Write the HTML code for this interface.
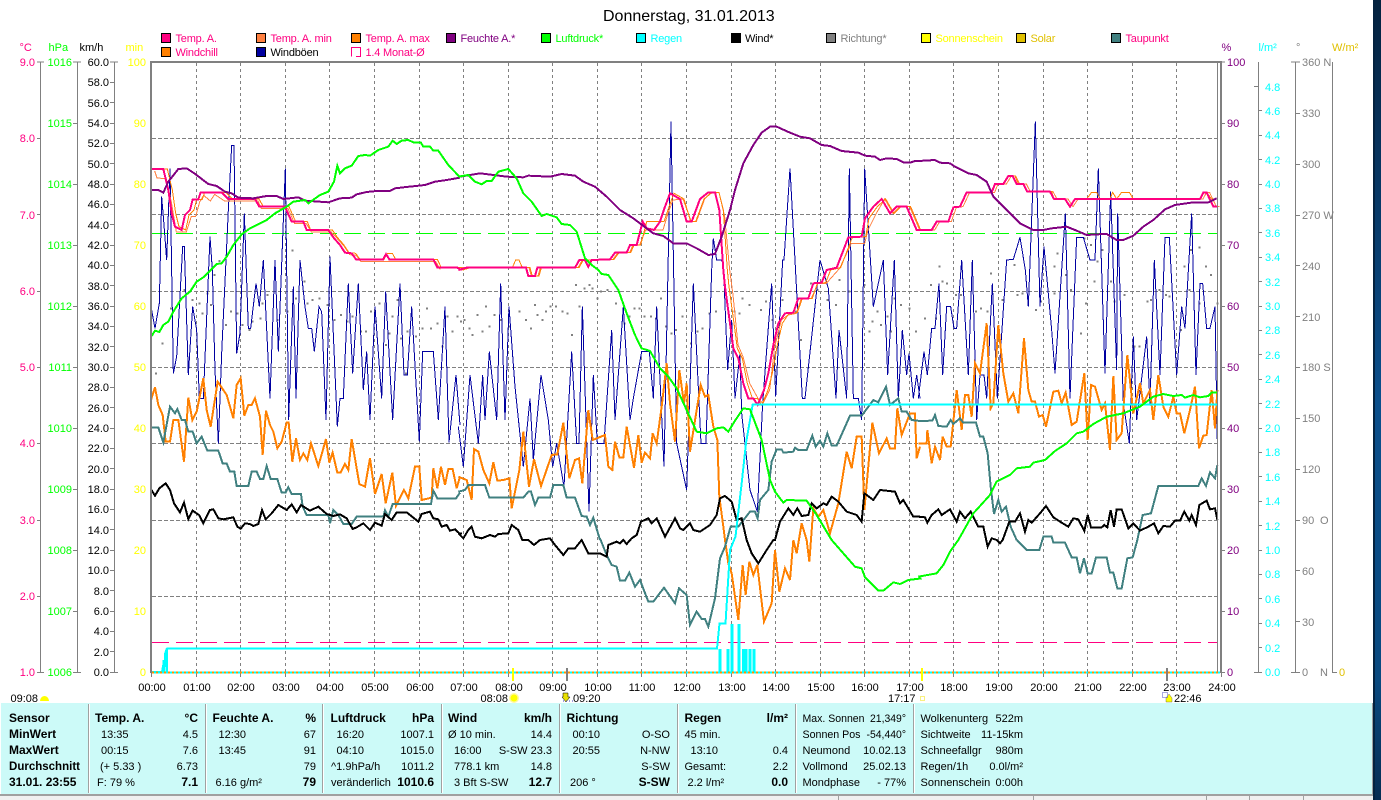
<!DOCTYPE html>
<html><head><meta charset="utf-8"><title>Donnerstag, 31.01.2013</title>
<style>
html,body{margin:0;padding:0;background:#fff;width:1381px;height:800px;overflow:hidden}
svg{display:block;position:absolute;left:0;top:0}
text{font-family:"Liberation Sans",sans-serif;font-size:11px}
.b{font-weight:bold;font-size:12px;fill:#000}
.r{text-anchor:end}
.l polyline{fill:none;stroke-linejoin:miter}
.g{shape-rendering:crispEdges}
.lg text{letter-spacing:-.2px}
</style></head><body>
<svg width="1381" height="800" viewBox="0 0 1381 800">
<defs>
<linearGradient id="desk" x1="0" y1="0" x2="0" y2="1"><stop offset="0" stop-color="#04223f"/><stop offset=".15" stop-color="#073058"/><stop offset=".5" stop-color="#0b4f8c"/><stop offset=".85" stop-color="#0a4a80"/><stop offset="1" stop-color="#062c52"/></linearGradient>
</defs>
<rect x="1373" y="0" width="8" height="800" fill="url(#desk)"/>
<rect x="1373" y="0" width="2" height="800" fill="#04223f"/>
<rect x="1" y="703" width="1371" height="91" fill="#ccfaf8"/>
<rect x="1372" y="703" width="1" height="92" fill="#a0a0a0"/>
<rect x="0" y="794" width="1373" height="2" fill="#a0a0a0"/>
<rect x="0" y="796" width="1373" height="4" fill="#f0f0f0"/>
<path class="g" stroke="#a0a0a0" d="M1206.500 796V800M1249.500 796V800M1303.500 796V800M1033.500 796V800M838.500 794V800" fill="none"/>
<!-- panel separators -->
<g class="g" fill="#a0a0a0"><rect x="88" y="704" width="1" height="89"/><rect x="205" y="704" width="1" height="89"/><rect x="322" y="704" width="1" height="89"/><rect x="441" y="704" width="1" height="89"/><rect x="559" y="704" width="1" height="89"/><rect x="677" y="704" width="1" height="89"/><rect x="795" y="704" width="1" height="89"/><rect x="913" y="704" width="1" height="89"/></g>
<g class="g" fill="#fff"><rect x="89" y="704" width="1" height="89"/><rect x="206" y="704" width="1" height="89"/><rect x="323" y="704" width="1" height="89"/><rect x="442" y="704" width="1" height="89"/><rect x="560" y="704" width="1" height="89"/><rect x="678" y="704" width="1" height="89"/><rect x="796" y="704" width="1" height="89"/><rect x="914" y="704" width="1" height="89"/></g>

<!-- title -->
<text x="603" y="21" style="font-size:16px" fill="#000">Donnerstag, 31.01.2013</text>

<!-- legend -->
<g class="g" stroke="#000" stroke-width="1">
<rect x="161.500" y="33.500" width="9" height="9" fill="#ff0080"/><rect x="256.500" y="33.500" width="9" height="9" fill="#ff8040"/><rect x="351.500" y="33.500" width="9" height="9" fill="#ff8000"/><rect x="446.500" y="33.500" width="9" height="9" fill="#800080"/><rect x="541.500" y="33.500" width="9" height="9" fill="#00ff00"/><rect x="636.500" y="33.500" width="9" height="9" fill="#00ffff"/><rect x="731.500" y="33.500" width="9" height="9" fill="#000"/><rect x="826.500" y="33.500" width="9" height="9" fill="#808080"/><rect x="921.500" y="33.500" width="9" height="9" fill="#ffff00"/><rect x="1016.500" y="33.500" width="9" height="9" fill="#e0c000"/><rect x="1111.500" y="33.500" width="9" height="9" fill="#408080"/>
<rect x="161.500" y="47.500" width="9" height="9" fill="#ff8000"/><rect x="256.500" y="47.500" width="9" height="9" fill="#0000a0"/>
</g>
<path class="g" d="M351.500 56.500V47.500H360.500V56.500H356" fill="none" stroke="#ff0080"/>
<g class="lg" fill="#ff0080"><text x="175.500" y="42">Temp. A.</text><text x="270.500" y="42">Temp. A. min</text><text x="365.500" y="42">Temp. A. max</text><text x="1125.500" y="42">Taupunkt</text><text x="175.500" y="56">Windchill</text><text x="365.500" y="56">1.4 Monat-Ø</text></g>
<g class="lg"><text x="460.500" y="42" fill="#800080">Feuchte A.*</text><text x="555.500" y="42" fill="#00ff00">Luftdruck*</text><text x="650.500" y="42" fill="#00ffff">Regen</text><text x="745" y="42" fill="#000">Wind*</text><text x="840.500" y="42" fill="#808080">Richtung*</text><text x="935.500" y="42" fill="#ffff00">Sonnenschein</text><text x="1030.500" y="42" fill="#e0c000">Solar</text><text x="270.500" y="56" fill="#000">Windböen</text></g>

<!-- units -->
<text x="19.500" y="51" fill="#ff0080">°C</text><text x="48.500" y="51" fill="#00ff00">hPa</text><text x="79.500" y="51" fill="#000">km/h</text><text x="125.500" y="51" fill="#ffff00">min</text><text x="1221.500" y="51" fill="#800080">%</text><text x="1258.500" y="51" fill="#00ffff">l/m²</text><text x="1296" y="51" fill="#808080">°</text><text x="1332" y="51" fill="#e0c000">W/m²</text>

<!-- axes -->
<g class="g" stroke="#808080" stroke-width="1" fill="none">
<path d="M40.500 62V672M77.500 62V672M114.500 62V672M1258.500 62V672M1295.500 62V672M1332.500 62V672"/>
<path d="M37 62H44M37 138.500H41M37 214.500H41M37 291.500H41M37 367.500H41M37 443.500H41M37 520.500H41M37 596.500H41M37 672.500H44"/>
<path d="M73 62H81M73 123.500H77M73 184.500H77M73 245.500H77M73 306.500H77M73 367.500H77M73 428.500H77M73 489.500H77M73 550.500H77M73 611.500H77M73 672.500H81"/>
<path d="M110 62H118M110 82.500H114M110 102.500H114M110 123.500H114M110 143.500H114M110 163.500H114M110 184.500H114M110 204.500H114M110 224.500H114M110 245.500H114M110 265.500H114M110 285.500H114M110 306.500H114M110 326.500H114M110 346.500H114M110 367.500H114M110 387.500H114M110 407.500H114M110 428.500H114M110 448.500H114M110 468.500H114M110 489.500H114M110 509.500H114M110 529.500H114M110 550.500H114M110 570.500H114M110 590.500H114M110 611.500H114M110 631.500H114M110 651.500H114M110 672.500H118"/>
<path d="M1221 62H1225M1221 123.500H1225M1221 184.500H1225M1221 245.500H1225M1221 306.500H1225M1221 367.500H1225M1221 428.500H1225M1221 489.500H1225M1221 550.500H1225M1221 611.500H1225M1221 672.500H1225"/>
<path d="M1254 86.500H1258M1258 110.500H1262M1258 135.500H1262M1258 159.500H1262M1258 184.500H1262M1258 208.500H1262M1258 232.500H1262M1258 257.500H1262M1258 281.500H1262M1258 306.500H1262M1258 330.500H1262M1258 354.500H1262M1258 379.500H1262M1258 403.500H1262M1258 428.500H1262M1258 452.500H1262M1258 476.500H1262M1258 501.500H1262M1258 525.500H1262M1258 550.500H1262M1258 574.500H1262M1258 598.500H1262M1258 623.500H1262M1258 647.500H1262M1254 672.500H1262"/>
<path d="M1291 62H1300M1295 113.500H1300M1295 164.500H1300M1295 215.500H1300M1295 265.500H1300M1295 316.500H1300M1295 367.500H1300M1295 418.500H1300M1295 469.500H1300M1295 520.500H1300M1295 570.500H1300M1295 621.500H1300M1291 672.500H1300M1332 672.500H1337"/>
</g>
<g fill="#ff0080" class="r"><text class="r" x="35" y="66">9.0</text><text class="r" x="35" y="142">8.0</text><text class="r" x="35" y="219">7.0</text><text class="r" x="35" y="295">6.0</text><text class="r" x="35" y="371">5.0</text><text class="r" x="35" y="447">4.0</text><text class="r" x="35" y="524">3.0</text><text class="r" x="35" y="600">2.0</text><text class="r" x="35" y="676">1.0</text></g>
<g fill="#00ff00"><text class="r" x="72" y="66">1016</text><text class="r" x="72" y="127">1015</text><text class="r" x="72" y="188">1014</text><text class="r" x="72" y="249">1013</text><text class="r" x="72" y="310">1012</text><text class="r" x="72" y="371">1011</text><text class="r" x="72" y="432">1010</text><text class="r" x="72" y="493">1009</text><text class="r" x="72" y="554">1008</text><text class="r" x="72" y="615">1007</text><text class="r" x="72" y="676">1006</text></g>
<g fill="#000"><text class="r" x="109" y="66">60.0</text><text class="r" x="109" y="86">58.0</text><text class="r" x="109" y="107">56.0</text><text class="r" x="109" y="127">54.0</text><text class="r" x="109" y="147">52.0</text><text class="r" x="109" y="168">50.0</text><text class="r" x="109" y="188">48.0</text><text class="r" x="109" y="208">46.0</text><text class="r" x="109" y="229">44.0</text><text class="r" x="109" y="249">42.0</text><text class="r" x="109" y="269">40.0</text><text class="r" x="109" y="290">38.0</text><text class="r" x="109" y="310">36.0</text><text class="r" x="109" y="330">34.0</text><text class="r" x="109" y="351">32.0</text><text class="r" x="109" y="371">30.0</text><text class="r" x="109" y="391">28.0</text><text class="r" x="109" y="412">26.0</text><text class="r" x="109" y="432">24.0</text><text class="r" x="109" y="452">22.0</text><text class="r" x="109" y="473">20.0</text><text class="r" x="109" y="493">18.0</text><text class="r" x="109" y="513">16.0</text><text class="r" x="109" y="534">14.0</text><text class="r" x="109" y="554">12.0</text><text class="r" x="109" y="574">10.0</text><text class="r" x="109" y="595">8.0</text><text class="r" x="109" y="615">6.0</text><text class="r" x="109" y="635">4.0</text><text class="r" x="109" y="656">2.0</text><text class="r" x="109" y="676">0.0</text></g>
<g fill="#ffff00"><text class="r" x="146" y="66">100</text><text class="r" x="146" y="127">90</text><text class="r" x="146" y="188">80</text><text class="r" x="146" y="249">70</text><text class="r" x="146" y="310">60</text><text class="r" x="146" y="371">50</text><text class="r" x="146" y="432">40</text><text class="r" x="146" y="493">30</text><text class="r" x="146" y="554">20</text><text class="r" x="146" y="615">10</text><text class="r" x="146" y="676">0</text></g>
<g fill="#800080"><text x="1227" y="66">100</text><text x="1227" y="127">90</text><text x="1227" y="188">80</text><text x="1227" y="249">70</text><text x="1227" y="310">60</text><text x="1227" y="371">50</text><text x="1227" y="432">40</text><text x="1227" y="493">30</text><text x="1227" y="554">20</text><text x="1227" y="615">10</text><text x="1227" y="676">0</text></g>
<g fill="#00ffff"><text x="1265" y="91">4.8</text><text x="1265" y="115">4.6</text><text x="1265" y="139">4.4</text><text x="1265" y="164">4.2</text><text x="1265" y="188">4.0</text><text x="1265" y="212">3.8</text><text x="1265" y="237">3.6</text><text x="1265" y="261">3.4</text><text x="1265" y="286">3.2</text><text x="1265" y="310">3.0</text><text x="1265" y="334">2.8</text><text x="1265" y="359">2.6</text><text x="1265" y="383">2.4</text><text x="1265" y="408">2.2</text><text x="1265" y="432">2.0</text><text x="1265" y="456">1.8</text><text x="1265" y="481">1.6</text><text x="1265" y="505">1.4</text><text x="1265" y="530">1.2</text><text x="1265" y="554">1.0</text><text x="1265" y="578">0.8</text><text x="1265" y="603">0.6</text><text x="1265" y="627">0.4</text><text x="1265" y="652">0.2</text><text x="1265" y="676">0.0</text></g>
<g fill="#808080"><text x="1302" y="66">360 N</text><text x="1302" y="117">330</text><text x="1302" y="168">300</text><text x="1302" y="219">270 W</text><text x="1302" y="270">240</text><text x="1302" y="321">210</text><text x="1302" y="371">180 S</text><text x="1302" y="422">150</text><text x="1302" y="473">120</text><text x="1302" y="524">90</text><text x="1320" y="524">O</text><text x="1302" y="575">60</text><text x="1302" y="626">30</text><text x="1302" y="676">0</text><text x="1320" y="676">N</text></g>
<text x="1339" y="676" fill="#e0c000">0</text>

<!-- grid -->
<g class="g" fill="none" stroke="#808080">
<path stroke-dasharray="3 3" d="M196.500 63V672M240.500 63V672M285.500 63V672M329.500 63V672M374.500 63V672M419.500 63V672M463.500 63V672M508.500 63V672M552.500 63V672M597.500 63V672M641.500 63V672M686.500 63V672M731.500 63V672M775.500 63V672M820.500 63V672M864.500 63V672M909.500 63V672M953.500 63V672M998.500 63V672M1043.500 63V672M1087.500 63V672M1132.500 63V672M1176.500 63V672"/>
<path stroke-dasharray="4 2" d="M152 138.500H1218M152 214.500H1218M152 291.500H1218M152 367.500H1218M152 443.500H1218M152 520.500H1218M152 596.500H1218"/>
<path d="M151.500 672V677M196.500 672V677M240.500 672V677M285.500 672V677M329.500 672V677M374.500 672V677M419.500 672V677M463.500 672V677M508.500 672V677M552.500 672V677M597.500 672V677M641.500 672V677M686.500 672V677M731.500 672V677M775.500 672V677M820.500 672V677M864.500 672V677M909.500 672V677M953.500 672V677M998.500 672V677M1043.500 672V677M1087.500 672V677M1132.500 672V677M1176.500 672V677M1221.500 672V677"/>
</g>
<path class="g" d="M152 233.500H1218" stroke="#00ff00" stroke-dasharray="17 7" fill="none"/>
<path class="g" d="M152 642.500H1218" stroke="#ff0080" stroke-dasharray="17 7" fill="none"/>

<!-- dots Richtung -->
<g fill="none" stroke="#808080" stroke-width="6" class="g">
<path transform="translate(0,270) scale(.33333)" d="M510 115h6M485 220h6M465 310h6M550 60h6M575 90h6M595 100h6M605 130h6M620 70h6M630 105h6M640 15h6M675 165h6M690 125h6M710 130h6M725 165h6M745 180h6M755 155h6M778 145h6M785 100h6M800 75h6M830 150h6M860 125h6M885 85h6M910 35h6M920 100h6M935 90h6M955 85h6M980 105h6M1000 150h6M1020 135h6M1040 155h6M1055 140h6M1080 185h6M1095 185h6M1110 125h6M1125 155h6M1135 100h6M1155 225h6M1165 190h6M1175 140h6M1190 90h6M1200 205h6M1215 310h6M1220 185h6M1245 200h6M1265 175h6M1278 115h6M1290 175h6M1310 160h6M1325 230h6M1340 140h6M1355 185h6M1370 140h6M1380 155h6M655 -27h6M875 -58h6"/>
<path transform="translate(460,270) scale(.33333)" d="M10 150h6M25 175h6M35 195h6M50 135h6M65 185h6M75 110h6M85 170h6M100 135h6M120 150h6M145 170h6M175 125h6M195 150h6M210 175h6M222 105h6M230 135h6M245 150h6M255 125h6M268 110h6M285 110h6M305 125h6M320 130h6M333 195h6M345 45h6M355 110h6M370 55h6M385 45h6M395 55h6M410 85h6M420 65h6M440 60h6M465 100h6M490 160h6M505 140h6M520 115h6M535 115h6M550 140h6M570 140h6M585 145h6M600 85h6M615 170h6M632 190h6M645 180h6M665 140h6M690 220h6M710 185h6M725 175h6M745 130h6M765 125h6M820 125h6M835 130h6M845 85h6M865 105h6M900 120h6M915 95h6M935 150h6M965 90h6M985 130h6M1005 125h6M1020 210h6M1050 40h6M1070 60h6M1100 90h6M1125 105h6M1135 30h6M1165 65h6M1210 45h6M1225 185h6M1235 155h6M1250 125h6M1260 165h6M1280 140h6M1290 185h6M1300 85h6M1320 105h6M1345 115h6M1365 185h6"/>
<path transform="translate(920,270) scale(.33333)" d="M12 145h6M30 45h6M45 145h6M65 35h6M78 40h6M105 75h6M120 75h6M165 125h6M180 115h6M200 125h6M210 10h6M245 90h6M290 75h6M305 70h6M345 120h6M360 95h6M400 70h6M435 15h6M450 60h6M480 190h6M495 100h6M520 35h6M570 35h6M580 95h6M610 75h6M640 230h6M655 230h6M680 95h6M690 90h6M715 60h6M735 75h6M745 80h6M780 180h6M805 60h6M835 100h6M870 15h6M890 100h6M410 -50h6M510 -75h6M545 -60h6M490 -95h6M835 -68h6M810 -60h6M855 -10h6M790 -10h6M55 -10h6M400 -10h6M530 -25h6M280 -15h6"/>
</g>

<g class="l g">
<!-- Windböen -->
<g stroke="#0000a0" stroke-width="3" fill="none">
<polyline transform="translate(0,270) scale(.33333)" points="453,110 465,175 478,100 485,-220 490,-160 500,-30 510,-305 520,310 530,260 548,-70 553,-70 565,315 578,110 590,180 598,385 610,385 630,-100 637,0 645,300 655,520 665,250 685,-180 695,-373 702,-373 710,250 720,190 733,-170 745,175 752,175 768,40 778,110 790,-30 810,385 825,-30 835,245 856,-305 866,450 880,50 888,385 900,-30 915,110 925,175 935,175 943,245 957,110 965,125 978,450 990,-40 1012,470 1020,385 1030,385 1045,40 1058,310 1075,40 1090,360 1100,245 1110,450 1125,110 1145,385 1157,65 1178,450 1200,40 1212,315 1222,315 1235,110 1258,515 1268,245 1300,245 1315,450 1335,110 1347,517 1368,315 1380,465"/>
<polyline transform="translate(460,270) scale(.33333)" points="-5,470 10,590 30,315 55,520 68,315 75,450 88,245 110,450 122,40 135,450 147,110 165,350 190,590 210,385 220,570 243,315 265,450 278,590 290,520 312,650 335,245 350,520 357,520 367,110 387,725 400,315 412,520 432,520 455,180 465,450 490,110 510,450 520,385 545,245 568,245 580,385 590,110 612,590 633,-445 650,520 680,660 700,40 723,520 738,520 755,0 760,-95 770,-30 783,-30 790,-20 803,300 815,150 825,385 840,250 845,430 870,660 892,725 908,400 935,40 947,380 968,-30 972,-30 990,-305 1005,-30 1027,385 1035,385 1080,-30 1105,55 1128,385 1137,180 1160,385 1168,-305 1180,385 1195,385 1205,450 1214,-305 1240,110 1270,-30 1283,315 1303,-30 1315,385 1327,180 1340,315 1347,250 1360,385 1370,315 1380,385"/>
<polyline transform="translate(920,270) scale(.33333)" points="-5,385 12,245 22,315 35,175 45,175 57,40 68,315 80,110 92,110 102,175 110,175 125,-30 145,315 157,-30 170,450 180,315 192,315 200,385 217,40 232,385 260,-30 280,-32 300,-98 316,0 325,110 346,-445 360,110 372,-70 395,180 405,310 436,-170 450,385 470,-98 490,-98 510,-30 525,-30 535,-305 555,310 572,-235 590,300 593,-170 610,400 628,520 640,200 650,450 680,200 690,400 703,-30 720,315 735,-98 748,-98 770,315 785,110 795,175 815,-170 828,315 840,40 848,40 860,175 870,175 885,110 892,520"/>
</g>
<!-- Windchill -->
<g stroke="#ff8000" stroke-width="6" fill="none">
<polyline transform="translate(0,270) scale(.33333)" points="453,390 465,352 475,405 488,435 497,515 510,515 520,450 535,450 552,575 565,383 577,450 590,425 610,325 620,420 632,470 653,335 680,375 700,445 710,345 722,325 733,437 745,405 755,405 765,385 780,440 788,555 798,422 810,465 820,485 832,535 845,515 860,458 866,458 877,575 888,505 900,570 910,550 922,570 933,520 955,588 978,507 988,578 998,548 1012,608 1022,608 1035,582 1045,600 1055,507 1078,642 1095,650 1110,565 1125,672 1145,612 1157,700 1177,608 1188,708 1212,660 1225,685 1245,590 1258,590 1265,690 1295,683 1300,595 1312,655 1323,590 1335,645 1345,597 1358,597 1370,655 1380,620"/>
<polyline transform="translate(460,270) scale(.33333)" points="-5,620 20,630 35,690 42,537 55,545 70,600 88,640 100,577 112,632 130,630 148,625 155,715 178,600 190,485 207,650 222,568 243,648 275,555 292,553 310,458 328,625 345,570 357,565 367,640 385,420 398,510 435,495 445,590 457,600 465,515 478,562 490,562 500,470 522,593 535,495 545,578 555,548 570,565 578,490 590,520 605,410 620,280 630,400 645,515 658,300 672,400 680,340 690,545 722,345 735,380 745,375 760,470 772,510 778,680 790,770 795,810 805,880 815,910 835,1050 848,885 857,975 868,875 880,915 892,885 912,1055 935,1000 945,840 958,965 975,895 990,930 1000,810 1010,850 1025,760 1040,810 1048,875 1060,715 1075,740 1090,720 1110,790 1135,700 1160,545 1175,595 1190,500 1205,500 1213,720 1237,458 1257,550 1280,505 1290,535 1305,535 1312,415 1325,495 1350,430 1365,430 1370,565 1380,530"/>
<polyline transform="translate(920,270) scale(.33333)" points="-5,520 20,520 22,480 35,580 45,530 60,570 68,500 80,530 92,530 110,360 125,480 135,375 145,375 155,440 165,280 180,310 200,160 212,415 220,400 235,165 250,310 265,395 280,370 295,430 312,205 325,360 335,395 345,395 357,440 368,435 378,470 400,365 415,362 425,400 437,368 455,465 470,455 493,310 503,510 513,345 525,350 545,420 555,400 570,540 580,318 590,510 605,490 622,255 640,430 660,340 670,400 690,360 700,450 715,315 730,410 745,440 760,380 770,430 780,430 793,490 810,420 825,350 837,535 850,497 860,495 875,360 885,475 892,360"/>
</g>
<!-- Taupunkt -->
<g stroke="#408080" stroke-width="6" fill="none">
<polyline transform="translate(0,270) scale(.33333)" points="453,472 475,472 490,517 510,410 525,430 532,417 545,450 555,450 565,485 578,485 590,520 605,500 622,542 655,542 668,580 680,580 690,605 703,605 710,648 745,648 755,605 770,605 780,627 790,627 800,588 812,627 832,627 845,668 857,668 865,652 875,672 903,672 908,710 920,735 985,735 990,760 1000,720 1015,735 1030,762 1055,762 1070,740 1150,740 1155,720 1165,740 1178,702 1293,702 1300,662 1312,685 1368,685 1380,668"/>
<polyline transform="translate(460,270) scale(.33333)" points="-5,665 15,660 25,645 75,645 88,683 190,683 205,665 213,665 225,705 235,683 270,683 280,645 310,645 320,683 345,683 365,738 380,740 390,765 400,743 420,810"/>
<polyline transform="translate(460,540) scale(.33333)" points="420,-5 440,45 455,75 470,80 480,122 495,122 508,98 525,140 540,120 565,185 580,185 612,143 645,190 657,145 680,165 690,255 710,215 725,237 735,237 745,260 765,175 780,55 795,20 812,-40"/>
<polyline transform="translate(460,270) scale(.33333)" points="810,770 835,770 870,725 885,725 893,745 900,690 925,660 935,575 950,538 965,538 970,548 1000,545 1005,533 1015,540 1040,540 1057,497 1067,530 1080,512 1090,530 1102,490 1115,527 1130,527 1170,437 1205,437 1240,390 1255,397 1278,350 1290,405 1315,385 1325,425 1340,425 1355,450 1380,453"/>
<polyline transform="translate(920,270) scale(.33333)" points="-5,453 37,452 45,435 55,468 80,470 92,450 100,462 120,445 130,458 168,458 180,500 190,500 203,550 212,650 222,732 235,690 245,725 258,710 272,770 290,810"/>
<polyline transform="translate(920,540) scale(.33333)" points="290,0 320,30 358,30 370,-10 395,-10 400,8 435,8 455,52 470,52 480,100 492,55 503,100 515,100 528,52 560,52 570,98 580,98 592,145 605,145 622,55 638,52 652,0 668,-75 693,-80 715,-162 835,-162 845,-185 858,-162 870,-203 885,-185 892,-225"/>
</g>
<!-- Wind -->
<g stroke="#000" stroke-width="6" fill="none">
<polyline transform="translate(0,270) scale(.33333)" points="453,658 465,677 478,655 497,640 510,660 522,700 540,727 552,698 565,748 578,722 597,735 610,760 630,720 640,718 655,745 670,748 700,742 712,770 722,776 735,760 750,762 760,768 775,762 786,720 797,748 815,730 835,705 860,720 875,703 890,727 903,705 930,722 955,710 980,732 1000,738 1020,733 1040,745 1058,777 1070,772 1090,760 1110,780 1125,758 1145,767 1155,732 1175,750 1190,727 1220,727 1255,755 1265,732 1290,725 1300,745 1315,748 1325,770 1340,765 1350,782 1365,778 1378,790 1386,790"/>
<polyline transform="translate(460,270) scale(.33333)" points="-5,790 10,805 25,780 35,770 45,800 65,805 90,795 105,800 115,792 145,790 155,765 175,780 187,810 205,810 222,825 240,810 270,805 285,825 310,855 325,835 345,835 365,810 385,850 420,850 440,860 445,825 470,815 480,820 490,810 500,822 515,805 530,795 543,755 565,745 575,760 590,745 615,800 645,745 660,775 670,780 690,760 700,780 720,785 750,765 770,735 780,685 795,678 815,695 830,750 845,745 860,810 875,850 895,880 920,840 940,810 945,810 960,755 985,715 1000,735 1012,715 1025,738 1045,735 1055,700 1070,715 1090,700 1100,705 1115,680 1135,695 1160,725 1190,735 1205,755 1213,670 1220,675 1240,690 1260,660 1305,665 1320,700 1330,690 1360,740 1380,740"/>
<polyline transform="translate(920,270) scale(.33333)" points="-5,740 15,742 22,758 35,735 55,718 65,735 90,718 110,755 120,725 135,745 152,725 175,770 190,770 203,830 215,805 230,810 240,820 248,810 268,755 285,755 300,730 315,785 325,750 335,758 360,730 378,708 400,742 425,758 445,770 460,745 475,748 493,783 503,735 513,772 545,772 553,765 562,772 572,720 582,770 590,718 605,718 625,775 640,760 660,782 685,770 702,760 715,790 730,768 750,770 765,752 780,752 793,725 808,752 815,735 828,765 838,705 860,692 870,718 885,715 892,750"/>
</g>
<!-- Temp min / max (thin) -->
<g fill="none" stroke-width="3">
<g stroke="#ff8040">
<polyline transform="translate(3,2) scale(.33333)" points="455,507 462,528 490,530 505,600 520,690 550,690 565,643 578,643 590,600 602,580 622,597 635,577 665,597 695,597 765,597 775,620 855,620 875,665 910,665 925,690 985,690 1005,712 1025,735 1040,758 1060,760 1073,778 1298,778 1312,803"/>
<polyline transform="translate(463,0) scale(.33333)" points="-5,803 150,803 198,803 205,828 225,828 232,803 345,803 358,780 375,780 395,780 450,778 465,758 500,758 510,735 530,735 548,690 600,690 615,640 630,600 660,597 685,665 700,665 725,597 745,577 768,577 785,650 800,810 810,885 825,1035 840,1070 860,1150 885,1195 900,1210 920,1170 935,1040 955,960 975,945 1000,940 1015,895 1045,895 1065,850 1090,850 1130,805 1165,730 1205,730 1215,690 1240,640 1265,597 1290,640 1310,620 1340,620 1370,690 1382,690"/>
<polyline transform="translate(923,0) scale(.33333)" points="-5,690 35,690 50,665 85,665 100,622 120,620 140,577 215,577 225,552 250,552 265,528 278,528 290,552 310,552 322,575 390,575 402,597 435,597 450,620 465,597 500,597 840,597 850,578 860,578 880,620 889,620"/>
</g>
<g stroke="#ff8000">
<polyline transform="translate(4,0) scale(.33333)" points="455,507 490,507 505,570 515,640 525,680 545,690 555,645 570,630 578,598 595,598 602,577 665,577 685,597 765,597 778,620 855,620 875,665 910,665 920,690 985,690 1000,712 1020,735 1035,758 1055,760 1068,778 1140,778 1150,760 1165,760 1175,778 1300,778 1312,803 1372,803 1380,810"/>
<polyline transform="translate(464,0) scale(.33333)" points="-5,810 20,803 145,803 155,780 165,780 175,803 198,803 205,828 225,828 232,803 345,803 358,780 375,780 395,780 450,778 465,758 500,758 510,735 530,735 548,665 600,665 615,620 630,580 660,597 680,665 695,665 720,597 745,577 765,577 778,630 790,810 795,860 810,970 820,1045 835,1075 850,1150 865,1195 880,1195 893,1215 912,1170 925,1120 940,1035 955,970 975,940 1000,938 1015,895 1045,895 1060,850 1085,848 1100,810 1130,803 1165,712 1205,710 1215,655 1240,620 1265,597 1290,640 1310,620 1340,620 1370,690 1382,690"/>
<polyline transform="translate(920,0) scale(.33333)" points="0,690 35,690 50,665 85,665 100,622 120,620 140,577 215,577 225,552 250,552 265,528 285,528 295,552 310,552 322,575 395,575 402,597 435,597 450,620 465,597 500,597 515,577 530,577 540,597 570,597 578,577 590,597 605,577 628,577 640,597 840,597 850,577 860,577 875,597 890,597"/>
</g>
</g>
<!-- Temp A. -->
<g stroke="#ff0080" stroke-width="6" fill="none">
<polyline transform="scale(.33333)" points="455,507 490,507 505,570 515,640 525,680 545,690 555,645 570,630 578,598 595,598 602,577 665,577 685,597 765,597 778,620 855,620 875,665 910,665 920,690 985,690 1000,712 1020,735 1035,758 1055,760 1068,778 1150,778 1158,762 1168,778 1300,778 1312,803 1372,803 1385,810"/>
<polyline transform="translate(460,0) scale(.33333)" points="-5,810 20,803 150,803 198,803 205,828 225,828 232,803 345,803 358,780 375,780 385,800 395,780 450,778 465,758 500,758 510,735 530,735 548,665 560,685 582,690 600,665 615,620 630,580 660,597 680,665 695,665 720,597 745,577 765,577 778,630 790,810 795,860 810,970 820,1045 835,1075 850,1150 865,1195 880,1195 893,1215 912,1170 925,1120 940,1035 955,970 975,940 1000,938 1015,895 1045,895 1060,850 1085,848 1100,810 1130,803 1165,712 1205,710 1215,655 1240,620 1265,597 1290,640 1310,620 1340,620 1370,690 1382,690"/>
<polyline transform="translate(920,0) scale(.33333)" points="-5,690 35,690 50,665 85,665 100,622 120,620 140,577 215,577 225,552 250,552 265,528 278,528 290,552 310,552 322,575 390,575 402,597 435,597 450,620 465,597 500,597 840,597 850,578 860,578 880,620 892,620"/>
</g>
<!-- Feuchte -->
<g stroke="#800080" stroke-width="6" fill="none">
<polyline transform="scale(.33333)" points="455,570 475,570 490,578 505,545 535,507 560,505 580,518 600,533 625,552 650,558 675,575 695,580 715,593 760,595 800,588 830,588 850,597 895,592 915,602 985,607 1020,595 1055,593 1070,583 1100,576 1130,573 1170,573 1185,565 1210,562 1275,555 1305,545 1340,540 1380,533"/>
<polyline transform="translate(460,0) scale(.33333)" points="0,530 60,520 100,525 140,530 190,532 205,527 270,530 305,522 345,527 370,545 405,560 440,590 480,630 520,655 560,685 580,700 610,708 640,730 680,730 710,745 745,765 765,762 785,710 810,630 825,570 850,490 880,435 905,398 930,380 950,380 990,398 1020,410 1050,415 1085,435 1110,438 1145,453 1195,458 1215,467 1245,470 1260,480 1280,475 1310,477 1330,487 1350,488 1365,483 1385,483"/>
<polyline transform="translate(920,0) scale(.33333)" points="-5,483 45,480 60,488 90,490 105,500 145,520 170,525 200,545 220,590 260,630 300,670 340,690 370,690 395,685 440,680 470,692 500,705 530,703 560,702 590,720 610,720 640,707 670,680 700,660 735,628 765,615 820,607 865,607 890,595"/>
</g>
<!-- Regen -->
<g fill="none" stroke="#00ffff">
<path stroke-width="2" d="M152 672H162L163 666H165V654L167 648V672M167 648.500H717L719.500 623.500H725.500L730 550L735.500 536.500L741.700 483L746 443L752.700 404.500H1218"/>
<path stroke-width="3" d="M720 649V672M728 649V672M732 624V672M739 624V672M743.500 649V672M746 649V672M750 649V672M754 649V672M164 660V672"/>
</g>
<!-- Luftdruck -->
<g stroke="#00ff00" stroke-width="6" fill="none">
<polyline transform="translate(0,270) scale(.33333)" points="455,198 465,182 478,186 490,165 505,155 520,125 545,85 570,65 590,35 610,22 630,2"/>
<polyline transform="scale(.33333)" points="630,812 650,792 665,790 680,770 700,735 725,703 750,685 770,675 800,660 825,640 860,620 880,605 915,600 925,610 960,585 985,575 1002,545 1012,497 1020,520 1035,505 1055,497 1075,468 1095,465 1110,467 1135,450 1165,440 1178,422 1190,432 1205,422 1225,420 1240,427 1262,427 1270,440 1290,440 1300,452 1315,452 1345,495 1380,532"/>
<polyline transform="translate(460,0) scale(.33333)" points="-5,530 25,525 45,545 65,553 80,543 95,543 115,515 145,507 170,535 190,580 215,605 245,648 260,642 290,652 305,672 330,675 350,695 375,775 395,795 415,810"/>
<polyline transform="translate(460,270) scale(.33333)" points="415,0 425,12 445,15 475,60 500,130 525,195 545,235 570,243 600,295 625,320 650,355 680,420 710,485 740,490 770,475 790,472 805,485 825,452 850,415 870,418 905,510 930,630 945,665 970,698 980,690 1040,692 1070,735 1115,810 1150,850 1185,890 1205,895 1215,922 1255,962 1270,962 1300,937 1320,942 1345,930 1385,925"/>
<polyline transform="translate(920,270) scale(.33333)" points="-5,920 50,910 70,885 90,845 115,810 160,730 210,675 230,635 270,615 290,595 330,590 340,578 375,570 405,543 440,520 470,490 490,485 520,462 560,440 610,430 660,410 700,380 730,372 760,378 785,375 795,383 820,375 840,382 865,378 875,367 892,367"/>
</g>
</g>

<!-- frame -->
<g class="g" fill="#808080">
<rect x="150" y="61" width="1072" height="2"/>
<rect x="150" y="61" width="2" height="612"/>
<rect x="1217" y="61" width="1" height="612"/>
<rect x="1220" y="61" width="2" height="612"/>
</g>
<path class="g" d="M152 672.500H1220" stroke="#00ffff" stroke-width="2" fill="none"/>
<path class="g" d="M152 672.500H1220" stroke="#ff9000" stroke-width="2" stroke-dasharray="2 2" fill="none"/>
<g class="g"><rect x="512" y="668" width="2" height="13" fill="#ffff00"/><rect x="566" y="668" width="2" height="13" fill="#808080"/><rect x="921" y="668" width="2" height="13" fill="#ffff00"/><rect x="1166" y="668" width="2" height="13" fill="#808080"/></g>

<!-- x labels -->
<g fill="#000">
<text x="152" y="691" text-anchor="middle">00:00</text><text x="197" y="691" text-anchor="middle">01:00</text><text x="241" y="691" text-anchor="middle">02:00</text><text x="286" y="691" text-anchor="middle">03:00</text><text x="330" y="691" text-anchor="middle">04:00</text><text x="375" y="691" text-anchor="middle">05:00</text><text x="420" y="691" text-anchor="middle">06:00</text><text x="464" y="691" text-anchor="middle">07:00</text><text x="509" y="691" text-anchor="middle">08:00</text><text x="553" y="691" text-anchor="middle">09:00</text><text x="598" y="691" text-anchor="middle">10:00</text><text x="642" y="691" text-anchor="middle">11:00</text><text x="687" y="691" text-anchor="middle">12:00</text><text x="732" y="691" text-anchor="middle">13:00</text><text x="776" y="691" text-anchor="middle">14:00</text><text x="821" y="691" text-anchor="middle">15:00</text><text x="865" y="691" text-anchor="middle">16:00</text><text x="910" y="691" text-anchor="middle">17:00</text><text x="954" y="691" text-anchor="middle">18:00</text><text x="999" y="691" text-anchor="middle">19:00</text><text x="1044" y="691" text-anchor="middle">20:00</text><text x="1088" y="691" text-anchor="middle">21:00</text><text x="1133" y="691" text-anchor="middle">22:00</text><text x="1177" y="691" text-anchor="middle">23:00</text><text x="1222" y="691" text-anchor="middle">24:00</text>
</g>
<g fill="#000"><text x="10.500" y="702">09:08</text><text x="480.500" y="702">08:08</text><text x="573" y="702">09:20</text><text x="888" y="702">17:17</text><text x="1174" y="702">22:46</text></g>
<!-- sun icons -->
<path d="M40 701a4.500 5 0 0 1 9 0z" fill="#ffff00"/>
<circle cx="514" cy="698" r="5" fill="#fff8a0"/><circle cx="514" cy="698" r="3.500" fill="#ffff00"/>
<path d="M563 693h5v4h2l-4 5-4-5h1z" fill="#e8e000" stroke="#000" stroke-width=".5"/>
<path class="g" d="M563 701h10" stroke="#4040c0" stroke-dasharray="1 2" fill="none"/>
<rect x="920.500" y="696.500" width="4" height="4" fill="none" stroke="#f8f080"/>
<path d="M1169 694l3 4v4h-6v-4z" fill="#ffff00" stroke="#555" stroke-width=".4"/>
<rect class="g" x="1162.500" y="692.500" width="5" height="5" fill="none" stroke="#5050c0" stroke-dasharray="1 1"/>

<!-- panel text -->
<g fill="#000">
<text class="b" x="9" y="722">Sensor</text><text class="b" x="9" y="738">MinWert</text><text class="b" x="9" y="754">MaxWert</text><text class="b" x="9" y="770" textLength="71" lengthAdjust="spacingAndGlyphs">Durchschnitt</text><text class="b" x="9" y="786">31.01. 23:55</text>

<text class="b" x="95" y="722">Temp. A.</text><text class="b r" x="198" y="722">°C</text>
<text x="101" y="738">13:35</text><text class="r" x="198" y="738">4.5</text>
<text x="101" y="754">00:15</text><text class="r" x="198" y="754">7.6</text>
<text x="100" y="770">(+ 5.33 )</text><text class="r" x="198" y="770">6.73</text>
<text x="97" y="786">F: 79 %</text><text class="b r" x="198" y="786">7.1</text>

<text class="b" x="212.500" y="722">Feuchte A.</text><text class="b r" x="316" y="722">%</text>
<text x="218.500" y="738">12:30</text><text class="r" x="316" y="738">67</text>
<text x="218.500" y="754">13:45</text><text class="r" x="316" y="754">91</text>
<text class="r" x="316" y="770">79</text>
<text x="215.500" y="786">6.16 g/m²</text><text class="b r" x="316" y="786">79</text>

<text class="b" x="330.500" y="722">Luftdruck</text><text class="b r" x="434" y="722">hPa</text>
<text x="336.500" y="738">16:20</text><text class="r" x="434" y="738">1007.1</text>
<text x="336.500" y="754">04:10</text><text class="r" x="434" y="754">1015.0</text>
<text x="331" y="770">^1.9hPa/h</text><text class="r" x="434" y="770">1011.2</text>
<text x="331" y="786">veränderlich</text><text class="b r" x="434" y="786">1010.6</text>

<text class="b" x="448" y="722">Wind</text><text class="b r" x="552" y="722">km/h</text>
<text x="448" y="738">Ø 10 min.</text><text class="r" x="552" y="738">14.4</text>
<text x="454" y="754">16:00</text><text class="r" x="552" y="754">S-SW 23.3</text>
<text x="454" y="770">778.1 km</text><text class="r" x="552" y="770">14.8</text>
<text x="454" y="786">3 Bft S-SW</text><text class="b r" x="552" y="786">12.7</text>

<text class="b" x="566.500" y="722">Richtung</text>
<text x="572.500" y="738">00:10</text><text class="r" x="670" y="738">O-SO</text>
<text x="572.500" y="754">20:55</text><text class="r" x="670" y="754">N-NW</text>
<text class="r" x="670" y="770">S-SW</text>
<text x="570" y="786">206 °</text><text class="b r" x="670" y="786">S-SW</text>

<text class="b" x="684.500" y="722">Regen</text><text class="b r" x="788" y="722">l/m²</text>
<text x="684.500" y="738">45 min.</text>
<text x="690.500" y="754">13:10</text><text class="r" x="788" y="754">0.4</text>
<text x="684.500" y="770">Gesamt:</text><text class="r" x="788" y="770">2.2</text>
<text x="687.500" y="786">2.2 l/m²</text><text class="b r" x="788" y="786">0.0</text>

<text x="802.500" y="722" textLength="62" lengthAdjust="spacingAndGlyphs">Max. Sonnen</text><text x="870" y="722" textLength="36" lengthAdjust="spacingAndGlyphs">21,349°</text>
<text x="802.500" y="738" textLength="58" lengthAdjust="spacingAndGlyphs">Sonnen Pos</text><text x="866.500" y="738" textLength="39.500" lengthAdjust="spacingAndGlyphs">-54,440°</text>
<text x="802.500" y="754">Neumond</text><text class="r" x="906" y="754">10.02.13</text>
<text x="802.500" y="770">Vollmond</text><text class="r" x="906" y="770">25.02.13</text>
<text x="802.500" y="786">Mondphase</text><text class="r" x="906" y="786">- 77%</text>

<text x="920.500" y="722">Wolkenunterg</text><text class="r" x="1023" y="722">522m</text>
<text x="920.500" y="738">Sichtweite</text><text class="r" x="1023" y="738">11-15km</text>
<text x="920.500" y="754">Schneefallgr</text><text class="r" x="1023" y="754">980m</text>
<text x="920.500" y="770">Regen/1h</text><text class="r" x="1023" y="770">0.0l/m²</text>
<text x="920.500" y="786">Sonnenschein</text><text class="r" x="1023" y="786">0:00h</text>
</g>
</svg>
</body></html>
